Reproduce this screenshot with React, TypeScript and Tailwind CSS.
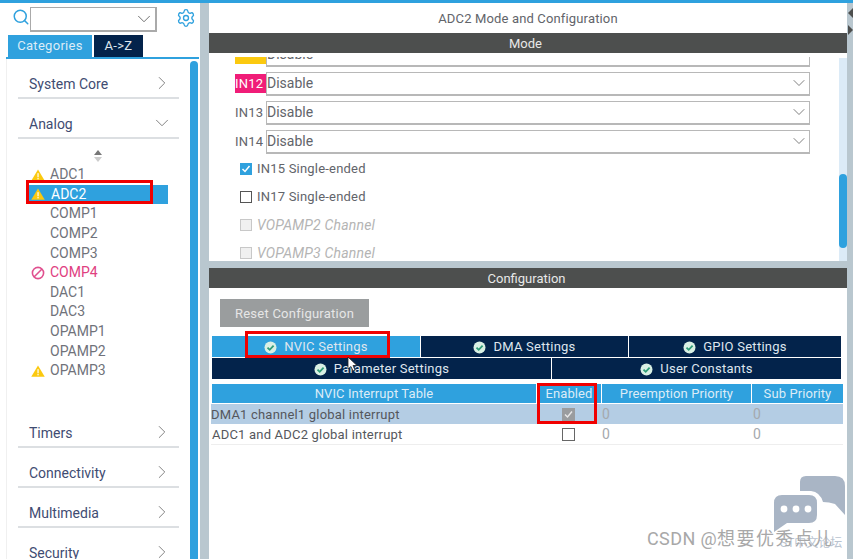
import { ChevronDown, ChevronRight, Search, Settings } from 'lucide-react';

const FONT = "font-['Roboto','Noto_Sans_CJK_SC',sans-serif]";

function Warn() {
  return (
    <svg width="14" height="12" viewBox="0 0 15 13">
      <path d="M7.5 0.5 L14.8 12.6 H0.2 Z" fill="#fbc90f" />
      <rect x="6.9" y="4.5" width="1.3" height="4.5" fill="#fff" />
      <rect x="6.9" y="9.8" width="1.3" height="1.4" fill="#fff" />
    </svg>
  );
}

function Blocked() {
  return (
    <svg width="14" height="14" viewBox="0 0 14 14" fill="none" stroke="#e0508f" strokeWidth="1.6">
      <circle cx="7" cy="7" r="5.6" />
      <path d="M3 11 L11 3" />
    </svg>
  );
}

function OkDot() {
  return (
    <svg width="13" height="13" viewBox="0 0 13 13" className="shrink-0">
      <circle cx="6.5" cy="6.5" r="6" fill="#d9f0e4" />
      <path d="M3.5 6.6 L5.7 8.8 L9.6 4.6" fill="none" stroke="#2f9d78" strokeWidth="1.8" />
    </svg>
  );
}

function Category({ name, open }: { name: string; open?: boolean }) {
  return (
    <div className="h-10 w-[161px] shrink-0 flex items-end justify-between border-b-2 border-[#dcdfe2] pb-[2px] pl-[11px] pr-[9px] text-[14px] text-[#3f4c72]">
      <span>{name}</span>
      {open ? (
        <ChevronDown size={22} strokeWidth={1} className="text-[#777] mb-[1px] mr-[-3px]" />
      ) : (
        <ChevronRight size={22} strokeWidth={1} className="text-[#777] mb-[1px] mr-[-3px]" />
      )}
    </div>
  );
}

function Peripheral({ name, icon, selected, pink }: { name: string; icon?: 'warn' | 'block'; selected?: boolean; pink?: boolean }) {
  return (
    <div className={`h-[19.6px] w-[140px] flex items-center text-[14px] ${selected ? 'bg-[#2fa1de] text-white' : pink ? 'text-[#e0407f]' : 'text-[#70727a]'}`}>
      <span className="w-[19px] ml-[3px] shrink-0 flex items-center">
        {icon === 'warn' && <Warn />}
        {icon === 'block' && <Blocked />}
      </span>
      <span className={selected ? 'ml-[1px]' : ''}>{name}</span>
    </div>
  );
}

function ModeSelect({ label, pink }: { label: string; pink?: boolean }) {
  return (
    <div className="flex items-center h-[23px] mb-[6px] text-[14px] text-[#62646a]">
      <span className={`w-[31px] h-[19px] flex items-center text-[13px] tracking-[0.2px] ${pink ? 'bg-[#f01d78] text-white' : ''}`}>{label}</span>
      <div className="w-[544px] h-[24px] flex items-center justify-between border border-[#b8b8b8] border-b-2">
        <span>Disable</span>
        <ChevronDown size={20} strokeWidth={1} className="text-[#666]" />
      </div>
    </div>
  );
}

function ModeCheck({ label, kind }: { label: string; kind: 'on' | 'off' | 'disabled' }) {
  return (
    <div className="h-[28px] flex items-center pl-[5px]">
      {kind === 'on' ? (
        <span className="w-3 h-3 bg-[#2fa1de] flex items-center justify-center">
          <svg width="10" height="10" viewBox="0 0 10 10"><path d="M1.5 5 L4 7.5 L8.5 2" fill="none" stroke="#fff" strokeWidth="1.5" /></svg>
        </span>
      ) : (
        <span className={`w-3 h-3 border ${kind === 'off' ? 'border-[#555]' : 'border-[#c8c8c8] bg-[#f0f0f0]'}`} />
      )}
      <span className={`ml-[5px] ${kind === 'disabled' ? 'text-[14px] tracking-[0.2px] italic text-[#b4b4b4]' : 'text-[13px] tracking-[0.2px] text-[#62646a]'}`}>{label}</span>
    </div>
  );
}

function SettingTab({ label, active, className }: { label: string; active?: boolean; className: string }) {
  return (
    <div className={`h-[21px] pt-[1px] flex items-center justify-center gap-[7px] text-[13px] tracking-[0.25px] text-[#dfe6ee] ${active ? 'bg-[#2fa1de]' : 'bg-[#03234b]'} ${className}`}>
      <OkDot />
      <span>{label}</span>
    </div>
  );
}

function HeaderCell({ label, className }: { label: string; className: string }) {
  return <div className={`h-[19px] flex items-center justify-center bg-[#2fa1de] text-[13px] tracking-[0.1px] text-[#dcecf7] ${className}`}>{label}</div>;
}

function InterruptRow({ label, enabled }: { label: string; enabled?: boolean }) {
  return (
    <div className={`flex h-[20px] mb-[1px] items-center text-[13px] text-[#55575c] ${enabled ? 'bg-[#b4cde4]' : 'border-b border-[#eee]'}`}>
      <span className={`w-[325px] shrink-0 tracking-[0.2px] ${enabled ? 'pt-[1px]' : 'pl-[1px]'}`}>{label}</span>
      <span className="w-[64px] shrink-0 flex justify-center">
        {enabled ? (
          <span className="w-[13px] h-[13px] bg-[#9a9c9e] flex items-center justify-center">
            <svg width="11" height="11" viewBox="0 0 11 11"><path d="M2 5.5 L4.5 8 L9 2.5" fill="none" stroke="#e8e8e8" strokeWidth="1.4" /></svg>
          </span>
        ) : (
          <span className="w-[13px] h-[13px] border border-[#666] bg-white" />
        )}
      </span>
      <span className="w-[151px] shrink-0 pl-[2px] text-[14px] text-[#a5a9ae]">0</span>
      <span className="pl-[2px] text-[14px] text-[#a5a9ae]">0</span>
    </div>
  );
}

export default function App() {
  return (
    <div className={`${FONT} relative w-[853px] h-[559px] overflow-hidden bg-white flex flex-col`}>
      <div className="h-[3px] bg-[#2fa1de] shrink-0" />
      <div className="flex flex-1 min-h-0">
        {/* left tree */}
        <div className="w-[200px] shrink-0 flex flex-col">
          <div className="h-[32px] shrink-0 flex items-center pl-3">
            <Search size={18} strokeWidth={2} className="text-[#2fa1de] mt-[-4px]" />
            <div className="w-[127px] h-[25px] border border-[#aaa] border-r-2 border-b-2 flex items-center justify-end">
              <ChevronDown size={22} strokeWidth={1} className="text-[#666]" />
            </div>
            <Settings size={20} strokeWidth={1.6} className="ml-[19px] mt-[-3px] text-[#2fa1de]" />
          </div>
          <div className="h-[22px] shrink-0 flex pl-2 text-[13px] tracking-[0.3px]">
            <div className="w-[84px] flex items-center justify-center bg-[#2fa1de] text-[#dcecf7]">Categories</div>
            <div className="ml-[2px] w-[49px] flex items-center justify-center bg-[#03234b] text-[#dfe6ee]">A-&gt;Z</div>
          </div>
          <div className="ml-[6px] h-[2px] w-[193px] shrink-0 bg-[#2fa1de]" />
          <div className="flex flex-1 min-h-0 ml-[6px] border-l border-[#f0f0f0]">
            <div className="w-[183px] overflow-hidden pl-[11px]">
              <Category name="System Core" />
              <Category name="Analog" open />
              <div className="h-[26px] w-[161px] flex items-end justify-center pb-[3px]">
                <svg width="8" height="12" viewBox="0 0 8 12" className="ml-[-1px]">
                  <path d="M4 0 L8 5 H0 Z" fill="#777" />
                  <path d="M4 12 L8 7 H0 Z" fill="#ccc" />
                </svg>
              </div>
              <div className="ml-[10px]">
                <Peripheral name="ADC1" icon="warn" />
                <Peripheral name="ADC2" icon="warn" selected />
                <Peripheral name="COMP1" />
                <Peripheral name="COMP2" />
                <Peripheral name="COMP3" />
                <Peripheral name="COMP4" icon="block" pink />
                <Peripheral name="DAC1" />
                <Peripheral name="DAC3" />
                <Peripheral name="OPAMP1" />
                <Peripheral name="OPAMP2" />
                <Peripheral name="OPAMP3" icon="warn" />
              </div>
              <div className="h-[27px]" />
              <Category name="Timers" />
              <Category name="Connectivity" />
              <Category name="Multimedia" />
              <Category name="Security" />
            </div>
            <div className="w-2 mt-[2px] bg-[#2fa1de] rounded-t-[4px]" />
          </div>
        </div>
        <div className="w-[9px] shrink-0 bg-[#b9c7cf]" />

        {/* right pane */}
        <div className="w-[638px] shrink-0 flex flex-col">
          <div className="h-[30px] shrink-0 pt-[1px] flex items-center justify-center text-[13px] tracking-[0.15px] text-[#62646a]">ADC2 Mode and Configuration</div>
          <div className="h-[20px] shrink-0 pt-[1px] flex items-center justify-center bg-[#4d4f4e] text-[13px] text-[#e8e8e8] pr-[5px]">Mode</div>
          <div className="h-[208px] shrink-0 flex pt-[4px]">
            <div className="flex-1 overflow-hidden">
              <div className="pl-[26px] mt-[-14px]">
                <div className="flex items-center h-[23px] mb-[6px] text-[14px] text-[#62646a]">
                  <span className="w-[31px] h-[19px] bg-[#fbc90f]" />
                  <div className="w-[544px] h-[24px] flex items-center border border-[#b8b8b8] border-b-2">Disable</div>
                </div>
                <ModeSelect label="IN12" pink />
                <ModeSelect label="IN13" />
                <ModeSelect label="IN14" />
                <div className="mt-[-4px]">
                  <ModeCheck label="IN15 Single-ended" kind="on" />
                  <ModeCheck label="IN17 Single-ended" kind="off" />
                  <ModeCheck label="VOPAMP2 Channel" kind="disabled" />
                  <ModeCheck label="VOPAMP3 Channel" kind="disabled" />
                </div>
              </div>
            </div>
            <div className="w-2 bg-[#dcebf7] pt-[116px] mt-[1px]">
              <div className="h-[74px] bg-[#2fa1de] rounded-[4px]" />
            </div>
          </div>
          <div className="h-[7px] shrink-0 bg-[#b9c7cf]" />
          <div className="h-[20px] shrink-0 pt-[1px] flex items-center justify-center bg-[#4d4f4e] text-[13px] text-[#e8e8e8] pr-[3px]">Configuration</div>
          <div className="pl-[11px] pt-[11px]">
            <div className="w-[149px] h-[28px] pt-[1px] flex items-center justify-center bg-[#9a9d9e] text-[13px] tracking-[0.25px] text-[#e6e6e6]">Reset Configuration</div>
          </div>
          <div className="ml-[3px] mt-[9px] w-[629px]">
            <div className="flex gap-[1px]">
              <SettingTab label="NVIC Settings" active className="w-[208px]" />
              <SettingTab label="DMA Settings" className="w-[207px]" />
              <SettingTab label="GPIO Settings" className="flex-1" />
            </div>
            <div className="flex gap-[1px] mt-[1px]">
              <SettingTab label="Parameter Settings" className="w-[339px]" />
              <SettingTab label="User Constants" className="flex-1" />
            </div>
          </div>
          <div className="ml-[2px] mt-[5px] w-[632px]">
            <div className="flex gap-[1px] pl-[1px] mb-[1px]">
              <HeaderCell label="NVIC Interrupt Table" className="w-[324px]" />
              <HeaderCell label="Enabled" className="w-[64px]" />
              <HeaderCell label="Preemption Priority" className="w-[149px]" />
              <HeaderCell label="Sub Priority" className="flex-1" />
            </div>
            <InterruptRow label="DMA1 channel1 global interrupt" enabled />
            <InterruptRow label="ADC1 and ADC2 global interrupt" />
          </div>
        </div>
        <div className="flex-1 bg-[#b9c7cf]" />
      </div>

      {/* collapse arrows on the right edge */}
      <svg className="absolute left-[847px] top-[6px]" width="6" height="30" viewBox="0 0 6 30">
        <path d="M6 2 L1 7 L6 12 Z" fill="#4d4f4e" />
        <path d="M1 19 L6 24 L1 29 Z" fill="#4d4f4e" />
      </svg>

      {/* red annotation boxes */}
      <div className="absolute left-[26px] top-[180px] w-[127px] h-[24px] border-[3px] border-[#f00000]" />
      <div className="absolute left-[245px] top-[331px] w-[145px] h-[27px] border-[3px] border-[#f00000]" />
      <div className="absolute left-[537px] top-[383px] w-[60px] h-[41px] border-[3px] border-[#f00000]" />

      {/* mouse cursor */}
      <svg className="absolute left-[347px] top-[356px]" width="11" height="16" viewBox="0 0 11 16">
        <path d="M1 1 V13 L4 10.5 L6 15 L8 14 L6 9.5 H10 Z" fill="#fff" stroke="#222" strokeWidth="0.8" />
      </svg>

      {/* watermark */}
      <svg className="absolute left-[773px] top-[476px]" width="73" height="72" viewBox="0 0 73 72">
        <path d="M27 6 Q27 0 33 0 H62 Q72 0 72 10 V39 L62 28 Q56 26 50 26 Q47 16 38 15 H27 Z" fill="#a9b5c5" />
        <path d="M9 19 H36 Q44 19 44 27 V39 Q44 47 36 47 H14 L1 56 V27 Q1 19 9 19 Z" fill="#a9b5c5" />
        <circle cx="11" cy="33" r="3.4" fill="#fff" />
        <circle cx="23" cy="33" r="3.4" fill="#fff" />
        <circle cx="35" cy="33" r="3.4" fill="#fff" />
      </svg>
      <div className="absolute left-[780px] top-[536px] text-[12px] leading-[14px] whitespace-nowrap text-[#b9c3d0]">ST中文论坛</div>
      <div className="absolute left-[647px] top-[528px] text-[18px] leading-[22px] tracking-[0.4px] whitespace-nowrap text-[#a8a8a8]">
        CSDN @<span className="tracking-[1.4px]">想要优秀点儿</span>
      </div>
    </div>
  );
}
